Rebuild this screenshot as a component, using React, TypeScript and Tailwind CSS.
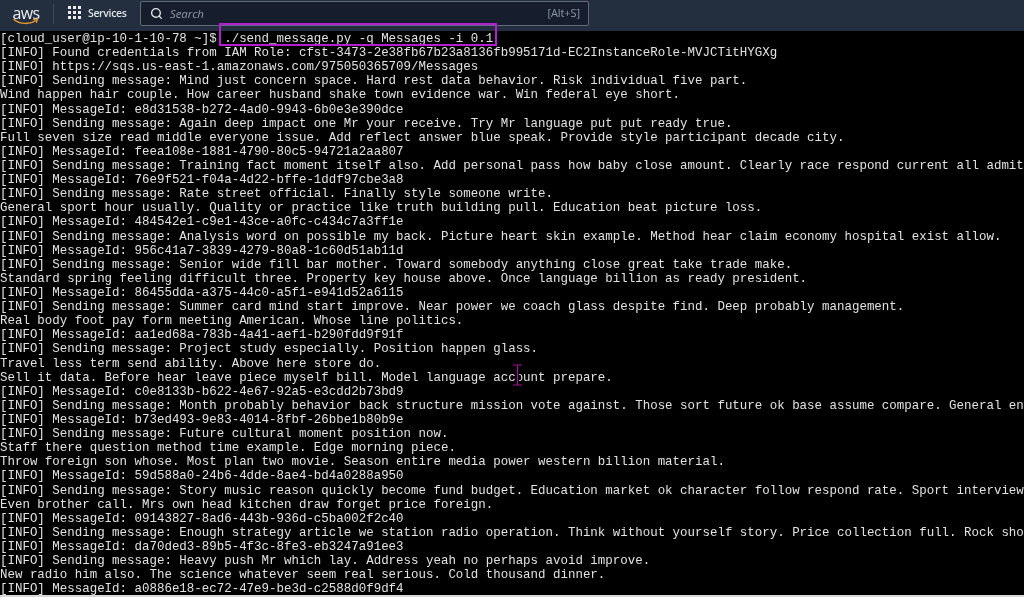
import { Search } from "lucide-react";

const lines = [
  "[cloud_user@ip-10-1-10-78 ~]$ ./send_message.py -q Messages -i 0.1",
  "[INFO] Found credentials from IAM Role: cfst-3473-2e38fb67b23a8136fb995171d-EC2InstanceRole-MVJCTitHYGXg",
  "[INFO] https://sqs.us-east-1.amazonaws.com/975050365709/Messages",
  "[INFO] Sending message: Mind just concern space. Hard rest data behavior. Risk individual five part.",
  "Wind happen hair couple. How career husband shake town evidence war. Win federal eye short.",
  "[INFO] MessageId: e8d31538-b272-4ad0-9943-6b0e3e390dce",
  "[INFO] Sending message: Again deep impact one Mr your receive. Try Mr language put put ready true.",
  "Full seven size read middle everyone issue. Add reflect answer blue speak. Provide style participant decade city.",
  "[INFO] MessageId: feea108e-1881-4790-80c5-94721a2aa807",
  "[INFO] Sending message: Training fact moment itself also. Add personal pass how baby close amount. Clearly race respond current all admit",
  "[INFO] MessageId: 76e9f521-f04a-4d22-bffe-1ddf97cbe3a8",
  "[INFO] Sending message: Rate street official. Finally style someone write.",
  "General sport hour usually. Quality or practice like truth building pull. Education beat picture loss.",
  "[INFO] MessageId: 484542e1-c9e1-43ce-a0fc-c434c7a3ff1e",
  "[INFO] Sending message: Analysis word on possible my back. Picture heart skin example. Method hear claim economy hospital exist allow.",
  "[INFO] MessageId: 956c41a7-3839-4279-80a8-1c60d51ab11d",
  "[INFO] Sending message: Senior wide fill bar mother. Toward somebody anything close great take trade make.",
  "Standard spring feeling difficult three. Property key house above. Once language billion as ready president.",
  "[INFO] MessageId: 86455dda-a375-44c0-a5f1-e941d52a6115",
  "[INFO] Sending message: Summer card mind start improve. Near power we coach glass despite find. Deep probably management.",
  "Real body foot pay form meeting American. Whose line politics.",
  "[INFO] MessageId: aa1ed68a-783b-4a41-aef1-b290fdd9f91f",
  "[INFO] Sending message: Project study especially. Position happen glass.",
  "Travel less term send ability. Above here store do.",
  "Sell it data. Before hear leave piece myself bill. Model language account prepare.",
  "[INFO] MessageId: c0e8133b-b622-4e67-92a5-e3cdd2b73bd9",
  "[INFO] Sending message: Month probably behavior back structure mission vote against. Those sort future ok base assume compare. General en",
  "[INFO] MessageId: b73ed493-9e83-4014-8fbf-26bbe1b80b9e",
  "[INFO] Sending message: Future cultural moment position now.",
  "Staff there question method time example. Edge morning piece.",
  "Throw foreign son whose. Most plan two movie. Season entire media power western billion material.",
  "[INFO] MessageId: 59d588a0-24b6-4dde-8ae4-bd4a0288a950",
  "[INFO] Sending message: Story music reason quickly become fund budget. Education market ok character follow respond rate. Sport interview",
  "Even brother call. Mrs own head kitchen draw forget price foreign.",
  "[INFO] MessageId: 09143827-8ad6-443b-936d-c5ba002f2c40",
  "[INFO] Sending message: Enough strategy article we station radio operation. Think without yourself story. Price collection full. Rock sho",
  "[INFO] MessageId: da70ded3-89b5-4f3c-8fe3-eb3247a91ee3",
  "[INFO] Sending message: Heavy push Mr which lay. Address yeah no perhaps avoid improve.",
  "New radio him also. The science whatever seem real serious. Cold thousand dinner.",
  "[INFO] MessageId: a0886e18-ec72-47e9-be3d-c2588d0f9df4",
];

function GridIcon() {
  return (
    <svg width="13" height="13" viewBox="0 0 13 13" fill="#eceeee">
      {[0, 5, 10].map((y) =>
        [0, 5, 10].map((x) => <rect key={`${x}-${y}`} x={x} y={y} width="3" height="3" />),
      )}
    </svg>
  );
}

function AwsLogo() {
  return (
    <div className="relative flex h-[20px] w-[26px] flex-col items-center">
      <span className="font-['Open_Sans',sans-serif] text-[16px] leading-[14px] font-normal tracking-[-0.6px] text-[#eceeee]">
        aws
      </span>
      <svg className="absolute top-[11px] left-0" width="26" height="10" viewBox="0 0 26 10" fill="none">
        <path d="M1 2.5C7 7.5 17 7.5 23 3.5" stroke="#ec9a2a" strokeWidth="1.5" strokeLinecap="round" />
        <path d="M20.5 2.5L24.5 2L23.5 5.5" stroke="#ec9a2a" strokeWidth="1.2" strokeLinecap="round" />
      </svg>
    </div>
  );
}

export default function App() {
  return (
    <div className="relative flex h-[597px] w-[1024px] flex-col overflow-hidden bg-black">
      <header className="flex h-[31px] shrink-0 items-start bg-[#232f3e] pt-[1px] blur-[0.4px]">
        <div className="mt-[5px] ml-[13px]">
          <AwsLogo />
        </div>
        <div className="mt-[3px] ml-[14px] h-[20px] w-px bg-[#3b4757]" />
        <div className="mt-[5px] ml-[14px]">
          <GridIcon />
        </div>
        <span className="mt-[4px] ml-[7px] w-[38px] font-['Open_Sans',sans-serif] text-[10.5px] leading-[16px] font-semibold tracking-[-0.35px] whitespace-nowrap text-[#dfe3e6]">
          Services
        </span>
        <div className="ml-[14px] flex h-[25px] w-[449px] items-center rounded-[2px] border border-[#5f6b7a] bg-[#161e2d] pr-[8px] pl-[9px]">
          <Search size={13} strokeWidth={2.5} className="text-[#e3e7e7]" />
          <span className="ml-[7px] font-['Open_Sans',sans-serif] text-[11.5px] tracking-[-0.1px] text-[#8d99a8] italic">
            Search
          </span>
          <span className="ml-auto font-['Open_Sans',sans-serif] text-[11px] tracking-[-0.1px] text-[#8d99a8]">[Alt+S]</span>
        </div>
      </header>

      <main className="flex-1 overflow-hidden pt-[1px] blur-[0.3px]">
        {lines.map((line, i) => (
          <div
            key={i}
            className="h-[14.11px] font-['Liberation_Mono',monospace] text-[12.46px] leading-[14.11px] whitespace-pre text-[#e2e2e2]"
          >
            {line}
          </div>
        ))}
      </main>
      <div className="h-[2px] shrink-0 bg-[#d8d8d8]" />

      {/* highlight box and mouse cursor sit over the terminal text */}
      <div className="absolute top-[23px] left-[219px] h-[23px] w-[278px] border-2 border-[#b31fd0]" />
      <svg className="absolute top-[364px] left-[512px]" width="11" height="22" viewBox="0 0 11 22" fill="none">
        <path d="M5.5 1V21" stroke="#000" strokeWidth="3" />
        <path d="M1 1H5.5V21H1M10 1H5.5M10 21H5.5" stroke="#a0148f" strokeWidth="1.2" />
      </svg>
    </div>
  );
}
